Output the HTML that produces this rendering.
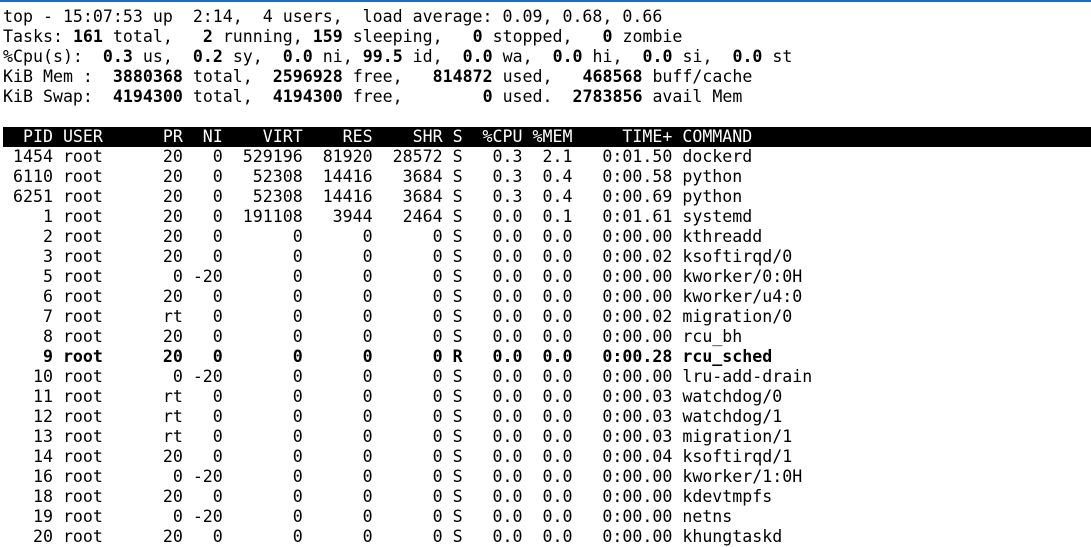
<!DOCTYPE html>
<html><head><meta charset="utf-8"><style>
html,body{margin:0;padding:0;background:#fff;width:1091px;height:535px;overflow:hidden}
.top{position:absolute;left:0;top:0;width:1091px;height:2px;background:#1a6fc4}
pre{position:absolute;left:3px;top:7px;margin:0;font-family:"DejaVu Sans Mono","Liberation Mono",monospace;font-size:16.6px;line-height:20px;color:#000;letter-spacing:0}
.h{background:#000;color:#fff;display:inline-block;width:1088px}
</style></head><body><div class="top"></div>
<pre>top - 15:07:53 up  2:14,  4 users,  load average: 0.09, 0.68, 0.66
Tasks: <b>161</b> total,   <b>2</b> running, <b>159</b> sleeping,   <b>0</b> stopped,   <b>0</b> zombie
%Cpu(s):  <b>0.3</b> us,  <b>0.2</b> sy,  <b>0.0</b> ni, <b>99.5</b> id,  <b>0.0</b> wa,  <b>0.0</b> hi,  <b>0.0</b> si,  <b>0.0</b> st
KiB Mem :  <b>3880368</b> total,  <b>2596928</b> free,   <b>814872</b> used,   <b>468568</b> buff/cache
KiB Swap:  <b>4194300</b> total,  <b>4194300</b> free,        <b>0</b> used.  <b>2783856</b> avail Mem

<span class="h">  PID USER      PR  NI    VIRT    RES    SHR S  %CPU %MEM     TIME+ COMMAND</span>
 1454 root      20   0  529196  81920  28572 S   0.3  2.1   0:01.50 dockerd
 6110 root      20   0   52308  14416   3684 S   0.3  0.4   0:00.58 python
 6251 root      20   0   52308  14416   3684 S   0.3  0.4   0:00.69 python
    1 root      20   0  191108   3944   2464 S   0.0  0.1   0:01.61 systemd
    2 root      20   0       0      0      0 S   0.0  0.0   0:00.00 kthreadd
    3 root      20   0       0      0      0 S   0.0  0.0   0:00.02 ksoftirqd/0
    5 root       0 -20       0      0      0 S   0.0  0.0   0:00.00 kworker/0:0H
    6 root      20   0       0      0      0 S   0.0  0.0   0:00.00 kworker/u4:0
    7 root      rt   0       0      0      0 S   0.0  0.0   0:00.02 migration/0
    8 root      20   0       0      0      0 S   0.0  0.0   0:00.00 rcu_bh
<b>    9 root      20   0       0      0      0 R   0.0  0.0   0:00.28 rcu_sched</b>
   10 root       0 -20       0      0      0 S   0.0  0.0   0:00.00 lru-add-drain
   11 root      rt   0       0      0      0 S   0.0  0.0   0:00.03 watchdog/0
   12 root      rt   0       0      0      0 S   0.0  0.0   0:00.03 watchdog/1
   13 root      rt   0       0      0      0 S   0.0  0.0   0:00.03 migration/1
   14 root      20   0       0      0      0 S   0.0  0.0   0:00.04 ksoftirqd/1
   16 root       0 -20       0      0      0 S   0.0  0.0   0:00.00 kworker/1:0H
   18 root      20   0       0      0      0 S   0.0  0.0   0:00.00 kdevtmpfs
   19 root       0 -20       0      0      0 S   0.0  0.0   0:00.00 netns
   20 root      20   0       0      0      0 S   0.0  0.0   0:00.00 khungtaskd</pre>
</body></html>
